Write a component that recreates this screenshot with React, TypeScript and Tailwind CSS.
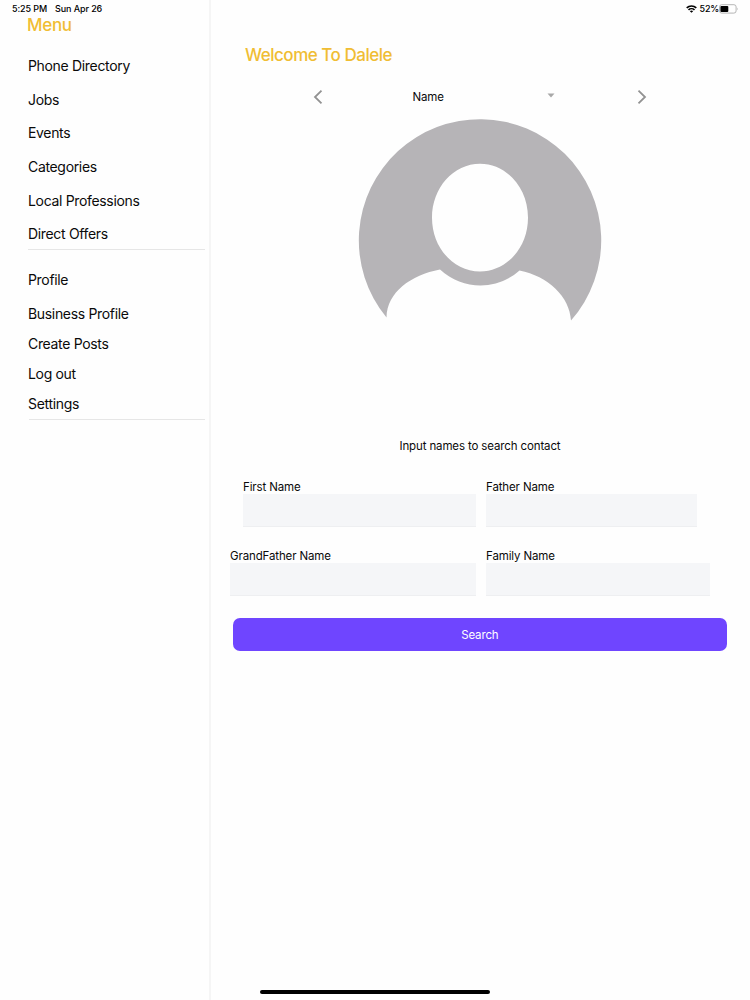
import React from "react";

const directory = ["Phone Directory", "Jobs", "Events", "Categories", "Local Professions", "Direct Offers"];
const account = ["Create Posts", "Log out", "Settings"];

function StatusBar() {
  return (
    <header className="absolute inset-x-0 top-0 flex h-[18px] items-center justify-between pr-3 pl-3 text-[9px] font-medium text-black">
      <div className="flex gap-2 tracking-[-0.1px]">
        <span>5:25 PM</span>
        <span>Sun Apr 26</span>
      </div>
      <div className="flex items-center gap-[2px]">
        <svg width="11" height="8" viewBox="0 0 11 8" fill="none" stroke="#000" strokeWidth="1.6">
          <path d="M0.7 2.9C3.4 0.3 7.6 0.3 10.3 2.9" />
          <path d="M2.5 4.9C4.2 3.3 6.8 3.3 8.5 4.9" />
          <path d="M5.5 7.8L3.9 6.2C4.8 5.4 6.2 5.4 7.1 6.2Z" fill="#000" stroke="none" />
        </svg>
        <span className="ml-px tracking-[-0.2px]">52%</span>
        <svg className="-mr-px -ml-[2px]" width="20" height="10" viewBox="0 0 20 10">
          <rect x="0.5" y="0.7" width="16.6" height="8.4" rx="2.2" fill="none" stroke="#a3a3a3" strokeWidth="0.8" />
          <rect x="1.4" y="1.9" width="7.9" height="6" rx="1" fill="#000" />
          <path d="M18.2 3.5Q19.4 4.9 18.2 6.3Z" fill="#a3a3a3" />
        </svg>
      </div>
    </header>
  );
}

function Sidebar() {
  return (
    <aside className="flex h-full w-[211px] flex-col border-r-2 border-[#f5f5f5] pr-[5px] pl-7 text-[14px] tracking-[-0.33px] text-[#0a0a0a]">
      <h1 className="mt-[13px] -ml-px h-6 text-[17px] leading-6 font-medium tracking-[-0.3px] text-[#f0bd33]">Menu</h1>
      <nav className="mt-3 -mr-px flex h-[201px] flex-col border-b border-[#e6e6e6]">
        {directory.map((label) => (
          <a key={label} className="h-[33.7px] shrink-0 leading-[34px]">{label}</a>
        ))}
      </nav>
      <nav className="mt-[13px] flex h-[157px] flex-col">
        <a className="h-[34px] shrink-0 leading-[34px]">Profile</a>
        <a className="h-8 shrink-0 leading-[34px]">Business Profile</a>
        {account.map((label) => (
          <a key={label} className="h-[30px] shrink-0 leading-[30px]">{label}</a>
        ))}
      </nav>
      <div className="-mt-px -mr-px ml-px h-px shrink-0 bg-[#e6e6e6]" />
    </aside>
  );
}

function Avatar() {
  return (
    <svg className="mx-auto block shrink-0" width="244" height="204" viewBox="358 118 244 204">
      <path
        fill="#b6b4b7"
        fillRule="evenodd"
        d="M386.5 317.5A121.200 121.200 0 1 1 571 320.5C570 297 548 276 519.5 270.5C497 290.5 463 290.5 440 269.5C411 275 387 292 386.5 317.5ZM480 163.700C453.500 163.700 432 187.700 432 217.700C432 247.700 453.500 271.500 480 271.500C506.500 271.500 528 247.700 528 217.700C528 187.700 506.500 163.700 480 163.700Z"
      />
    </svg>
  );
}

function Field({ label, className }: { label: string; className: string }) {
  return (
    <label className={className}>
      <span className="block h-[14px] leading-[15px] whitespace-nowrap">{label}</span>
      <input className="block h-[33px] w-full border-b border-[#eeeff1] bg-[#f5f6f8] outline-none" />
    </label>
  );
}

export default function App() {
  return (
    <div className="relative flex h-[1000px] w-[750px] overflow-hidden bg-[#fefefe] font-['Inter','Liberation_Sans',sans-serif]">
      <Sidebar />
      <main className="flex h-full flex-1 flex-col pl-px text-[11.5px] tracking-[-0.13px] text-[#0a0a0a]">
        <h2 className="mt-[43px] ml-[33px] h-6 text-[17px] leading-6 font-medium tracking-[-0.48px] text-[#f0bd33]">Welcome To Dalele</h2>
        <div className="mt-[20px] ml-[101px] flex h-5 w-[334px] items-center justify-between">
          <svg width="10" height="14" viewBox="0 0 10 14" fill="none" stroke="#929292" strokeWidth="1.8">
            <path d="M8.500 0.700L2 7L8.500 13.300" />
          </svg>
          <div className="ml-[7px] flex w-[142px] items-center justify-between">
            <span className="pt-[2px]">Name</span>
            <svg className="-mt-[3px]" width="8" height="5" viewBox="0 0 8 5">
              <path d="M0.500 0.500H7.500L4 4.500Z" fill="#a8a8a8" />
            </svg>
          </div>
          <svg width="10" height="14" viewBox="0 0 10 14" fill="none" stroke="#929292" strokeWidth="1.8">
            <path d="M1.500 0.700L8 7L1.500 13.300" />
          </svg>
        </div>
        <div className="mt-[11px] flex pr-[2px]">
          <Avatar />
        </div>
        <p className="mt-[116px] h-4 pr-[2px] text-center leading-4">Input names to search contact</p>
        <div className="mt-[26px] ml-[31px] flex gap-[10px]">
          <Field label="First Name" className="w-[233px]" />
          <Field label="Father Name" className="w-[211px]" />
        </div>
        <div className="mt-[22px] ml-[18px] flex gap-[10px]">
          <Field label="GrandFather Name" className="w-[246px]" />
          <Field label="Family Name" className="w-[224px]" />
        </div>
        <button className="mt-[22.4px] ml-[20.6px] h-[33px] w-[494.5px] rounded-[7px] bg-[#6f45ff] pt-px text-white">Search</button>
      </main>
      <StatusBar />
      <div className="absolute top-[990px] left-[260px] h-1 w-[230px] rounded-full bg-black" />
    </div>
  );
}
